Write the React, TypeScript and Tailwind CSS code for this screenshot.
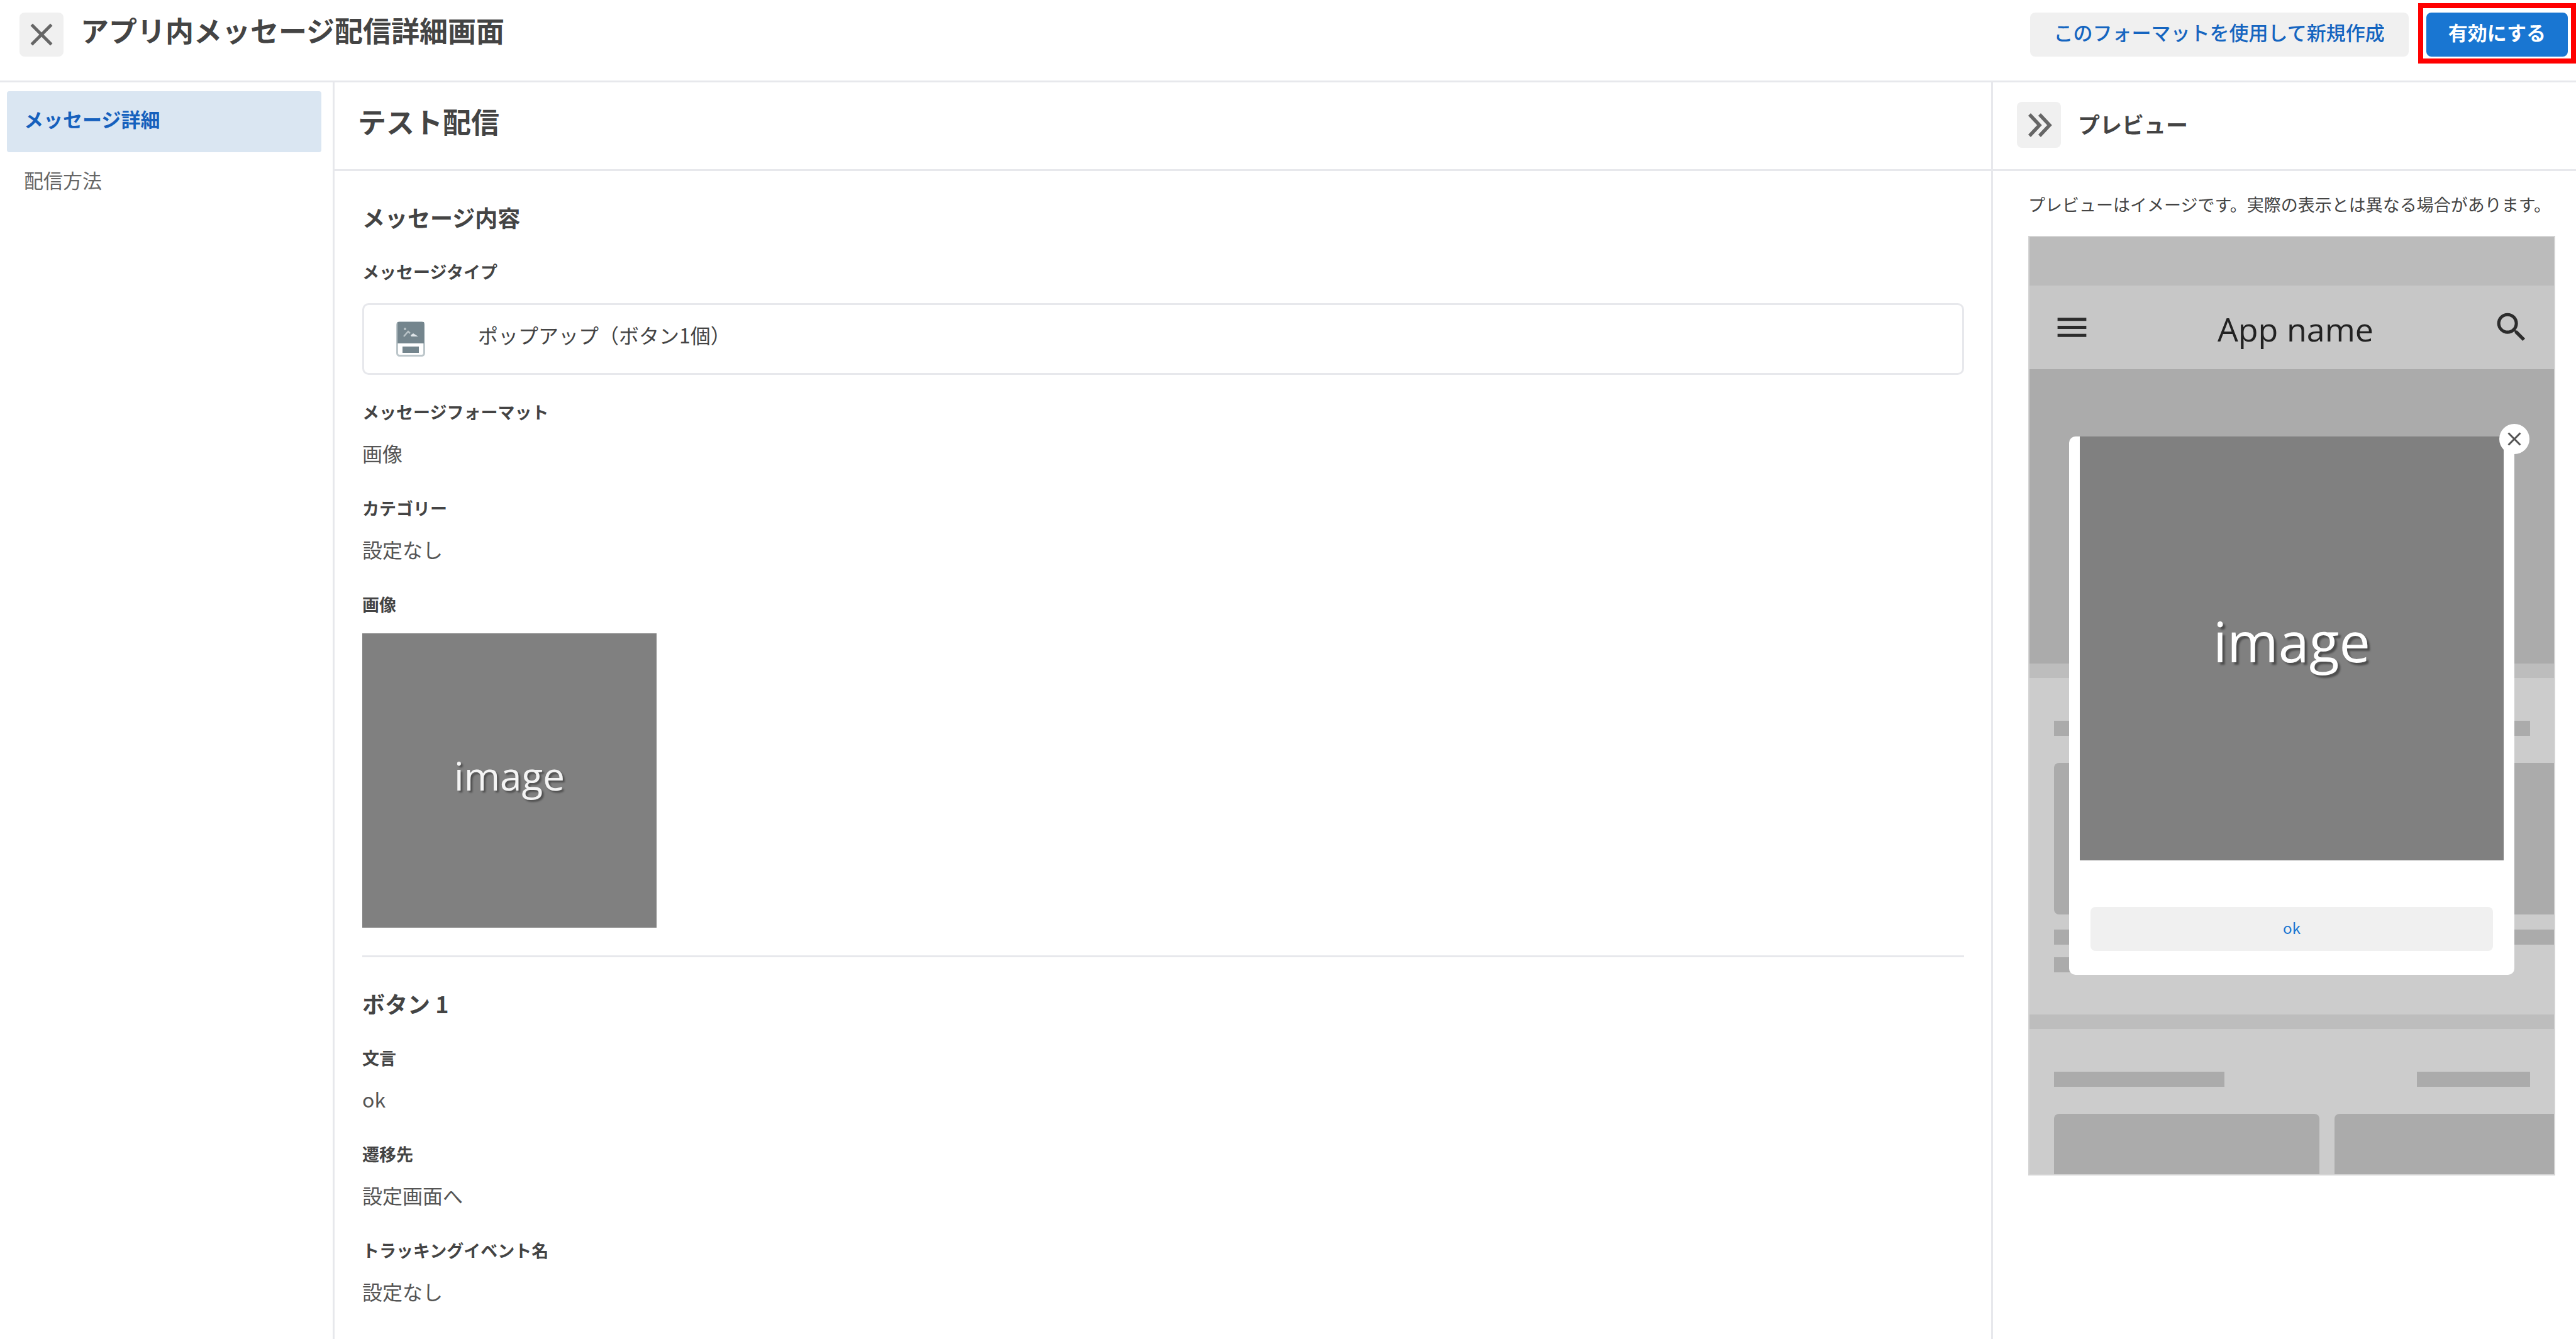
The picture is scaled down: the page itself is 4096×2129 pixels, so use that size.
import type { ReactNode } from "react"
import { MdClose, MdMenu, MdSearch } from "react-icons/md"

type Item = {
  label: string
  value: string
}

const navItems = [
  { id: "detail", label: "メッセージ詳細" },
  { id: "method", label: "配信方法" },
]

const contentItems: Item[] = [
  { label: "メッセージフォーマット", value: "画像" },
  { label: "カテゴリー", value: "設定なし" },
]

const buttonItems: Item[] = [
  { label: "文言", value: "ok" },
  { label: "遷移先", value: "設定画面へ" },
  { label: "トラッキングイベント名", value: "設定なし" },
]

function ChevronsIcon() {
  return (
    <svg width="38" height="38" viewBox="0 0 38 38" fill="none" stroke="currentColor" strokeWidth="5.5" aria-hidden="true">
      <path d="M2 2 18 19 2 36" />
      <path d="M18 2 34 19 18 36" />
    </svg>
  )
}

// Popup with a picture on top and one button below
function PopupTypeIcon() {
  return (
    <svg width="46" height="56" viewBox="0 0 46 56" fill="none" aria-hidden="true">
      <rect x="1.5" y="1.5" width="43" height="53" rx="4" fill="#fff" stroke="#bcc6ca" strokeWidth="3" />
      <path d="M2 1h42v34H2z" fill="#74858d" />
      <path d="M12 24l7-8 3 3" stroke="#b9c3c7" strokeWidth="2.5" />
      <path d="M23 22l4-3 8 5H24z" fill="#dfe5e8" />
      <circle cx="14" cy="12" r="2" fill="#b9c3c7" />
      <path d="M10 40h26v10H10z" fill="#74858d" />
    </svg>
  )
}

function Label({ children }: { children: ReactNode }) {
  return <div className="text-[27px] leading-[40px] font-bold text-[#444]">{children}</div>
}

function ItemList({ items }: { items: Item[] }) {
  return (
    <dl className="flex flex-col gap-[44px]">
      {items.map((item) => (
        <div key={item.label} className="flex flex-col gap-[21px]">
          <dt className="text-[27px] leading-[40px] font-bold text-[#444]">{item.label}</dt>
          <dd className="text-[32px] leading-[48px] text-[#555]">{item.value}</dd>
        </div>
      ))}
    </dl>
  )
}

function Bar({ className }: { className: string }) {
  return <div className={`h-6 bg-[#ababab] ${className}`} />
}

function PhonePreview() {
  return (
    <div className="relative h-[1494px] overflow-hidden border-2 border-[#d4d4d4] bg-[#cccccc]">
      <div className="h-[77px] bg-[#bbbbbb]" />
      <div className="flex h-[133px] items-center justify-between bg-[#c7c7c7] px-[37px] text-[#2c2c2c]">
        <MdMenu size={61} />
        <span className="pt-1 pl-3 font-['Open_Sans','Noto_Sans_CJK_JP',sans-serif] text-[52px] leading-[64px] text-[#222]">
          App name
        </span>
        <MdSearch size={61} />
      </div>
      <div className="h-[468px] bg-[#ababab]" />
      <div className="h-[23px] bg-[#bdbdbd]" />

      <div className="pt-[68px] pb-[67px] pl-[39px]">
        <div className="flex justify-between pr-[38px]">
          <Bar className="w-[271px]" />
          <Bar className="w-[180px]" />
        </div>
        <div className="mt-[43px] flex gap-6">
          <div className="h-[241px] w-[422px] rounded-lg bg-[#ababab]" />
          <div className="h-[241px] flex-1 rounded-l-lg bg-[#ababab]" />
        </div>
        <div className="mt-6 flex gap-6">
          <Bar className="w-[422px]" />
          <Bar className="flex-1" />
        </div>
        <Bar className="mt-5 w-[271px]" />
      </div>

      <div className="h-[23px] bg-[#bdbdbd]" />
      <div className="pt-[68px] pl-[39px]">
        <div className="flex justify-between pr-[38px]">
          <Bar className="w-[271px]" />
          <Bar className="w-[180px]" />
        </div>
        <div className="mt-[43px] flex gap-6">
          <div className="h-[241px] w-[422px] rounded-lg bg-[#ababab]" />
          <div className="h-[241px] flex-1 rounded-l-lg bg-[#ababab]" />
        </div>
      </div>

      {/* Popup over the app screen */}
      <div className="absolute inset-x-[63px] top-[317px] rounded-[10px] bg-white px-[17px] pb-[38px]">
        <button
          type="button"
          aria-label="閉じる"
          className="absolute -top-5 -right-6 flex size-12 items-center justify-center rounded-full bg-white text-[#555]"
        >
          <MdClose size={36} />
        </button>
        <div className="flex aspect-square items-center justify-center bg-[#808080] pb-6 font-['Open_Sans',sans-serif] text-[88px] leading-[100px] text-white [text-shadow:4px_4px_3px_rgba(0,0,0,0.4)]">
          image
        </div>
        <div className="mt-[74px] px-[17px]">
          <button type="button" className="h-[70px] w-full rounded-lg bg-[#f0f0f0] pb-1 text-[24px] text-[#1976d2]">
            ok
          </button>
        </div>
      </div>
    </div>
  )
}

export default function App() {
  return (
    <div className="flex min-h-screen flex-col bg-white font-['Noto_Sans_CJK_JP','Noto_Sans',sans-serif] text-[#444]">
      <header className="flex h-[131px] items-start border-b-3 border-[#e7e8ec] pl-[31px]">
        <button
          type="button"
          aria-label="閉じる"
          className="mt-5 flex size-[70px] items-center justify-center rounded-lg bg-[#f0f0f0] text-[#666]"
        >
          <MdClose size={60} />
        </button>
        <h1 className="mt-4 ml-[27px] text-[45px] leading-[64px] font-bold">アプリ内メッセージ配信詳細画面</h1>
        <button
          type="button"
          className="mt-5 mr-[15px] ml-auto h-[70px] rounded-lg bg-[#f0f0f0] px-[38px] pb-2 text-[31px] font-medium text-[#1565c0]"
        >
          このフォーマットを使用して新規作成
        </button>
        <div className="mt-[5px] border-8 border-[#ff0000] px-[5px] pt-[7px] pb-[3px]">
          <button
            type="button"
            className="h-[70px] rounded-lg bg-[#1976d2] px-[35px] pb-2 text-[31px] font-bold text-white"
          >
            有効にする
          </button>
        </div>
      </header>

      <div className="flex flex-1">
        <nav className="w-[532px] shrink-0 border-r-3 border-[#e7e8ec] pt-[14px] pr-[18px] pl-[11px]">
          {navItems.map((item, i) => (
            <a
              key={item.id}
              href={`#${item.id}`}
              aria-current={i === 0 ? "page" : undefined}
              className={[
                "flex h-[97px] items-center rounded px-[27px] pb-[10px] text-[31px] leading-[48px]",
                i === 0 ? "bg-[#dae6f2] font-bold text-[#1560bd]" : "text-[#666]",
              ].join(" ")}
            >
              {item.label}
            </a>
          ))}
        </nav>

        <main className="min-w-0 flex-1">
          <div className="flex h-[141px] items-center border-b-3 border-[#e7e8ec] px-[37px] pb-[14px]">
            <h2 className="text-[45px] leading-[64px] font-bold">テスト配信</h2>
          </div>

          <div className="pr-[43px] pl-11">
            <section className="pt-[49px] pb-11">
              <h3 className="text-[36px] leading-[48px] font-bold">メッセージ内容</h3>
              <div className="mt-[43px]">
                <Label>メッセージタイプ</Label>
                <div className="mt-[30px] flex h-[114px] items-center rounded-[10px] border-3 border-[#e7e8ec] pl-[51px]">
                  <PopupTypeIcon />
                  <span className="ml-[84px] pb-[14px] text-[32px] leading-[48px]">ポップアップ（ボタン1個）</span>
                </div>
              </div>
              <div className="mt-[39px]">
                <ItemList items={contentItems} />
              </div>
              <div className="mt-[44px]">
                <Label>画像</Label>
                <div className="mt-[26px] flex size-[468px] items-center justify-center bg-[#808080] pb-4 font-['Open_Sans',sans-serif] text-[62px] leading-[72px] text-[#f4f4f4] [text-shadow:3px_3px_3px_rgba(0,0,0,0.4)]">
                  image
                </div>
              </div>
            </section>

            <section className="border-t-3 border-[#e7e8ec] pt-[49px] pb-12">
              <h3 className="mb-[43px] text-[36px] leading-[48px] font-bold">ボタン 1</h3>
              <ItemList items={buttonItems} />
            </section>
          </div>
        </main>

        <aside className="w-[930px] shrink-0 border-l-3 border-[#e7e8ec]">
          <div className="flex h-[141px] items-center gap-[27px] border-b-3 border-[#e7e8ec] pb-[3px] pl-[38px]">
            <button
              type="button"
              aria-label="プレビューを閉じる"
              className="flex h-[73px] w-[70px] items-center justify-center rounded-lg bg-[#f0f0f0] pl-1 text-[#666]"
            >
              <ChevronsIcon />
            </button>
            <h2 className="pb-[3px] text-[35px] leading-[48px] font-bold">プレビュー</h2>
          </div>
          <div className="pt-[33px] pr-[33px] pl-14">
            <p className="mb-[30px] text-[27px] leading-[40px] whitespace-nowrap">
              プレビューはイメージです。実際の表示とは異なる場合があります。
            </p>
            <PhonePreview />
          </div>
        </aside>
      </div>
    </div>
  )
}
